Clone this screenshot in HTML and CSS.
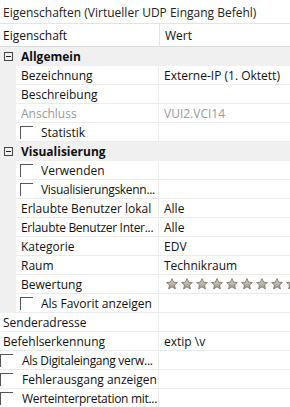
FILE: index.html
```html
<!DOCTYPE html>
<html>
<head>
<meta charset="utf-8">
<link rel="stylesheet" href="styles.css">
</head>
<body>
<div class="panel">
  <div class="title">Eigenschaften (Virtueller UDP Eingang Befehl)</div>
  <div class="head">
    <div class="hname">Eigenschaft</div>
    <div class="hval">Wert</div>
  </div>

  <div class="cat"><span class="toggle"></span><span class="catname">Allgemein</span></div>
  <div class="row in"><div class="gutter"></div><div class="cells"><div class="name">Bezeichnung</div><div class="val">Externe-IP (1. Oktett)</div></div></div>
  <div class="row in"><div class="gutter"></div><div class="cells"><div class="name">Beschreibung</div><div class="val"></div></div></div>
  <div class="row in"><div class="gutter"></div><div class="cells"><div class="name dim">Anschluss</div><div class="val dim">VUI2.VCI14</div></div></div>
  <div class="row in"><div class="gutter"></div><div class="cells"><div class="name chk"><span class="box"></span>Statistik</div><div class="val"></div></div></div>

  <div class="cat"><span class="toggle"></span><span class="catname">Visualisierung</span></div>
  <div class="row in"><div class="gutter"></div><div class="cells"><div class="name chk"><span class="box"></span>Verwenden</div><div class="val"></div></div></div>
  <div class="row in"><div class="gutter"></div><div class="cells"><div class="name chk"><span class="box"></span><span class="trunc">Visualisierungskenn...</span></div><div class="val"></div></div></div>
  <div class="row in"><div class="gutter"></div><div class="cells"><div class="name">Erlaubte Benutzer lokal</div><div class="val">Alle</div></div></div>
  <div class="row in"><div class="gutter"></div><div class="cells"><div class="name"><span class="trunc">Erlaubte Benutzer Inter...</span></div><div class="val">Alle</div></div></div>
  <div class="row in"><div class="gutter"></div><div class="cells"><div class="name">Kategorie</div><div class="val">EDV</div></div></div>
  <div class="row in"><div class="gutter"></div><div class="cells"><div class="name">Raum</div><div class="val">Technikraum</div></div></div>
  <div class="row in"><div class="gutter"></div><div class="cells"><div class="name">Bewertung</div><div class="val stars">
    <svg class="star" viewBox="0 0 12 12"><use href="#st"/></svg>
    <svg class="star" viewBox="0 0 12 12"><use href="#st"/></svg>
    <svg class="star" viewBox="0 0 12 12"><use href="#st"/></svg>
    <svg class="star" viewBox="0 0 12 12"><use href="#st"/></svg>
    <svg class="star" viewBox="0 0 12 12"><use href="#st"/></svg>
    <svg class="star" viewBox="0 0 12 12"><use href="#st"/></svg>
    <svg class="star" viewBox="0 0 12 12"><use href="#st"/></svg>
    <svg class="star" viewBox="0 0 12 12"><use href="#st"/></svg>
    <svg class="star" viewBox="0 0 12 12"><use href="#st"/></svg>
    <svg class="star" viewBox="0 0 12 12"><use href="#st"/></svg>
  </div></div></div>
  <div class="row in"><div class="gutter"></div><div class="cells"><div class="name chk"><span class="box"></span>Als Favorit anzeigen</div><div class="val"></div></div></div>

  <div class="row top"><div class="cells"><div class="name">Senderadresse</div><div class="val"></div></div></div>
  <div class="row top"><div class="cells"><div class="name">Befehlserkennung</div><div class="val">extip \v</div></div></div>
  <div class="row top"><div class="cells"><div class="name chk"><span class="box"></span><span class="trunc">Als Digitaleingang verw...</span></div><div class="val"></div></div></div>
  <div class="row top"><div class="cells"><div class="name chk"><span class="box"></span>Fehlerausgang anzeigen</div><div class="val"></div></div></div>
  <div class="row top"><div class="cells"><div class="name chk"><span class="box"></span><span class="trunc">Werteinterpretation mit...</span></div><div class="val"></div></div></div>
</div>

<svg width="0" height="0" class="defs">
  <defs>
    <linearGradient id="sg" x1="0" y1="0" x2="0" y2="1">
      <stop offset="0" stop-color="#dcd8ce"/>
      <stop offset="1" stop-color="#9a9486"/>
    </linearGradient>
    <path id="st" d="M6 0.6 L7.6 4.2 L11.4 4.5 L8.5 7 L9.4 10.9 L6 8.8 L2.6 10.9 L3.5 7 L0.6 4.5 L4.4 4.2 Z" fill="url(#sg)" stroke="#7e786a" stroke-width="0.9" stroke-linejoin="round"/>
  </defs>
</svg>
</body>
</html>
```
FILE: styles.css
```css
html, body {
  margin: 0;
  padding: 0;
  background: #ffffff;
}
body {
  font-family: "Open Sans", "Noto Sans", sans-serif;
  font-size: 12px;
  color: #111111;
  width: 290px;
  height: 407px;
  overflow: hidden;
}
.panel {
  display: flex;
  flex-direction: column;
}
.title {
  height: 23px;
  line-height: 25px;
  padding-left: 3px;
  border-bottom: 1px solid #e4e4e4;
  white-space: nowrap;
  overflow: hidden;
  color: #222;
}
.head {
  display: grid;
  grid-template-columns: 160px 1fr;
  height: 22px;
  line-height: 23px;
  border-bottom: 1px solid #dcdcdc;
}
.hname {
  padding-left: 3px;
  border-right: 1px solid #e6e6e6;
}
.hval {
  padding-left: 5px;
}
.cat {
  height: 18px;
  background: #f0f0f0;
  border-bottom: 1px solid #f0f0f0;
  display: flex;
  align-items: center;
}
.toggle {
  box-sizing: border-box;
  width: 9px;
  height: 9px;
  border: 1px solid #444;
  margin-left: 4px;
  margin-right: 8px;
  position: relative;
  flex: none;
}
.toggle::after {
  content: "";
  position: absolute;
  left: 1px;
  right: 1px;
  top: 3px;
  height: 1px;
  background: #222;
}
.catname {
  font-weight: bold;
  line-height: 19px;
}
.row {
  display: flex;
  height: 19px;
}
.gutter {
  width: 16px;
  flex: none;
  background: #f0f0f0;
}
.cells {
  flex: 1;
  display: grid;
  grid-template-columns: 143px 1fr;
  border-bottom: 1px solid #ebebeb;
  height: 18px;
  line-height: 19px;
  min-width: 0;
}
.row.top .cells {
  grid-template-columns: 159px 1fr;
}
.name {
  padding-left: 5px;
  border-right: 1px solid #ebebeb;
  white-space: nowrap;
  overflow: hidden;
  display: flex;
  align-items: center;
}
.trunc {
  letter-spacing: -0.3px;
}
.row.top .name {
  padding-left: 3px;
}
.row.top .name.chk {
  padding-left: 0;
}
.val {
  padding-left: 5px;
  white-space: nowrap;
  overflow: hidden;
}
.dim {
  color: #9a9a9a;
}
.box {
  box-sizing: border-box;
  width: 13px;
  height: 13px;
  border-top: 1px solid #555;
  border-left: 1px solid #555;
  flex: none;
  margin-right: 8px;
  margin-left: 0;
}
.row.in .name.chk {
  padding-left: 4px;
}
.row.top .box {
  margin-left: 0;
  margin-right: 9px;
}
.stars {
  display: flex;
  align-items: center;
  gap: 3px;
  padding-left: 7px;
}
.star {
  width: 12px;
  height: 12px;
  flex: none;
}
.defs {
  position: absolute;
}
```
